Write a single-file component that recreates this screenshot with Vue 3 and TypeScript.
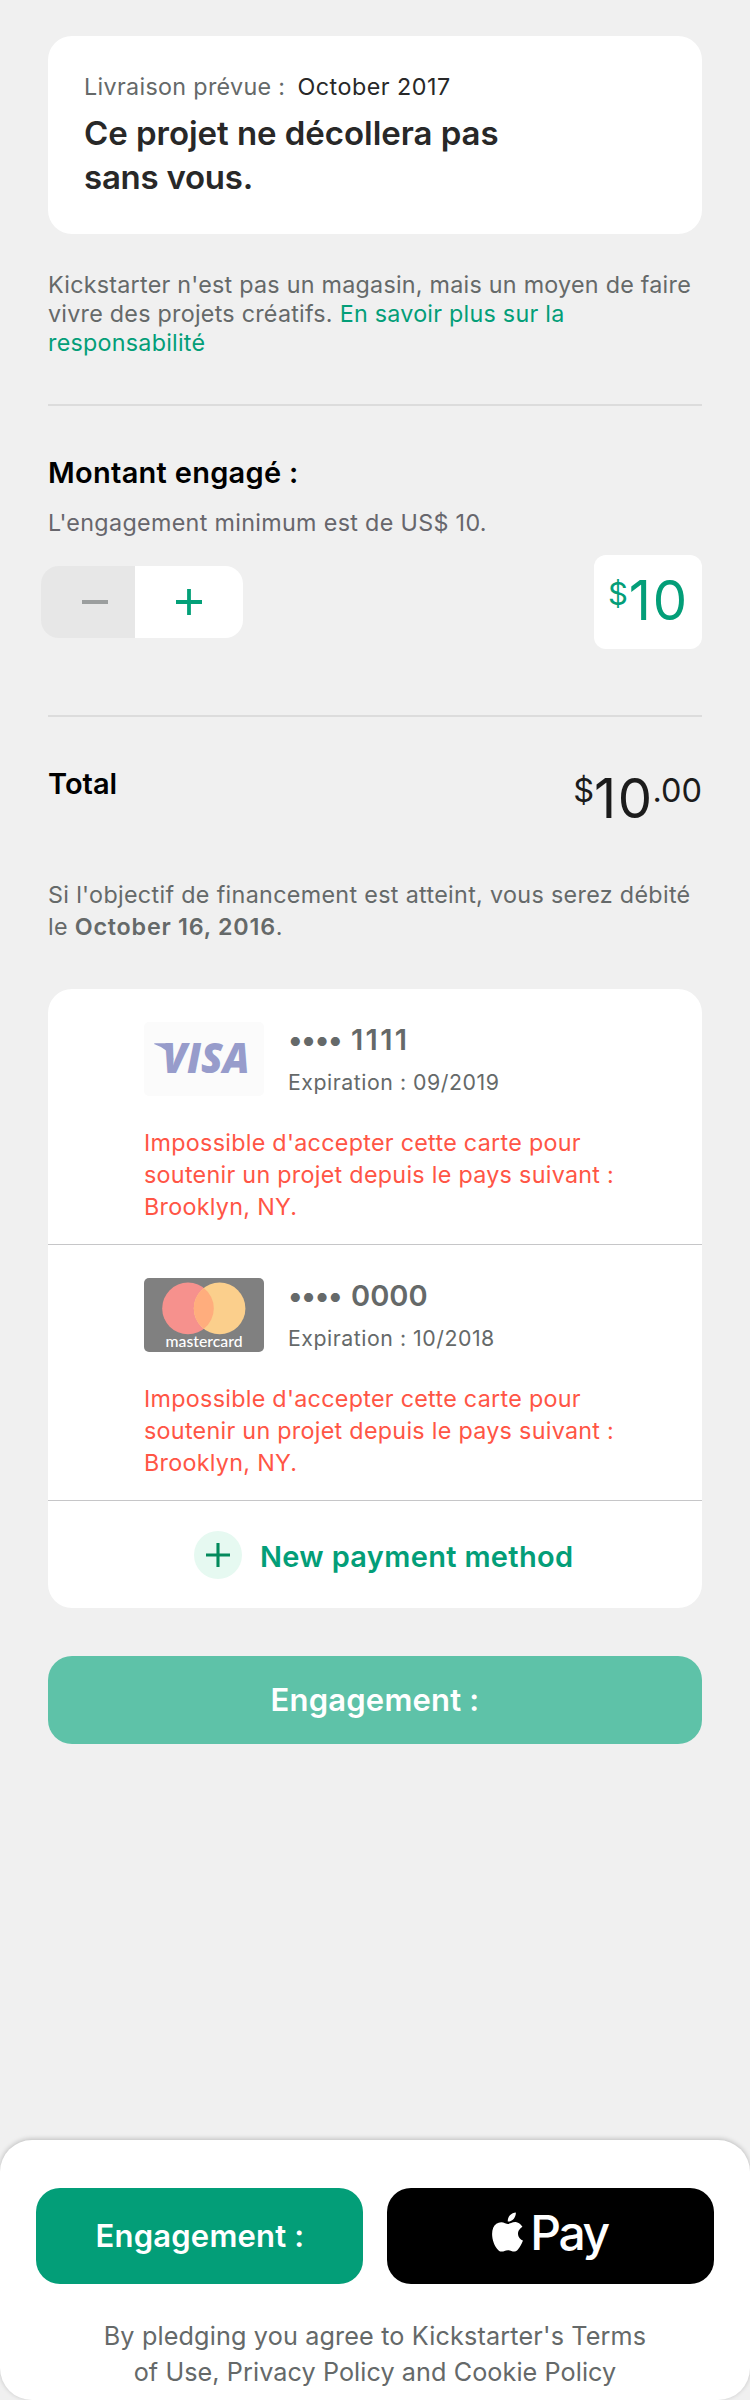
<script setup lang="ts">
interface Card {
  brand: 'visa' | 'mastercard'
  digits: string
  tracking: string
  expiry: string
}

const cards: Card[] = [
  { brand: 'visa', digits: '1111', tracking: 'wide', expiry: 'Expiration : 09/2019' },
  { brand: 'mastercard', digits: '0000', tracking: 'normal', expiry: 'Expiration : 10/2018' },
]
const errorLines: string[] = [
  "Impossible d'accepter cette carte pour",
  'soutenir un projet depuis le pays suivant :',
  'Brooklyn, NY.',
]
</script>

<template>
  <div class="page">
    <main class="content">
      <section class="summary">
        <p class="delivery"><span>Livraison prévue :</span><span class="date">October 2017</span></p>
        <h1>Ce projet ne décollera pas<br /><span class="tight">sans vous.</span></h1>
      </section>

      <p class="note">
        Kickstarter n'est pas un magasin, mais un moyen de faire<br />
        vivre des projets créatifs. <a>En savoir plus sur la<br />responsabilité</a>
      </p>

      <hr />

      <section class="pledge">
        <h2>Montant engagé :</h2>
        <p class="minimum">L'engagement minimum est de US$ 10.</p>
        <div class="controls">
          <div class="stepper">
            <button class="minus" type="button" aria-label="minus">
              <svg width="28" height="28" viewBox="0 0 28 28"><path d="M1 14H27" stroke="#9b9e9e" stroke-width="4" /></svg>
            </button>
            <button class="plus" type="button" aria-label="plus">
              <svg width="28" height="28" viewBox="0 0 28 28"><path d="M1 14H27M14 1V27" stroke="#03a078" stroke-width="3.8" /></svg>
            </button>
          </div>
          <div class="amount"><span class="small">$</span><span class="big">10</span></div>
        </div>
      </section>

      <hr class="second" />

      <section class="total">
        <h2>Total</h2>
        <div class="sum"><span class="small">$</span><span class="big">10</span><span class="small cents">.00</span></div>
      </section>

      <p class="charge">
        Si l'objectif de financement est atteint, vous serez débité<br />
        le <b>October 16, 2016</b>.
      </p>

      <section class="methods">
        <article v-for="card in cards" :key="card.digits" class="method">
          <div class="row">
            <svg v-if="card.brand === 'visa'" class="logo" width="120" height="74" viewBox="0 0 120 74">
              <rect width="120" height="74" rx="5" fill="#fbfbfb" />
              <path d="M10 22Q10 21.300 11 21.300H23Q26.500 21.300 27.200 25L29.500 38Q24.500 27 10 22Z" fill="#979ccb" />
              <text x="18.500" y="51.200" textLength="87" lengthAdjust="spacingAndGlyphs" class="visa">VISA</text>
            </svg>
            <svg v-else class="logo" width="120" height="74" viewBox="0 0 120 74">
              <rect width="120" height="74" rx="5" fill="#808080" />
              <circle cx="44" cy="30.400" r="25.800" fill="#f6918d" />
              <circle cx="75.600" cy="30.400" r="25.800" fill="#fbcf8c" />
              <path d="M59.800 10A25.800 25.800 0 0 1 59.800 50.800A25.800 25.800 0 0 1 59.800 10Z" fill="#ffad7d" />
              <text x="21.500" y="69" textLength="77" lengthAdjust="spacingAndGlyphs" class="mc">mastercard</text>
            </svg>
            <div class="details">
              <p class="number"><span class="dots">••••</span><span :class="card.tracking">{{ card.digits }}</span></p>
              <p class="expiry">{{ card.expiry }}</p>
            </div>
          </div>
          <p class="error"><span v-for="line in errorLines" :key="line">{{ line }}</span></p>
        </article>
        <div class="new-method">
          <svg width="48" height="48" viewBox="0 0 48 48">
            <circle cx="24" cy="24" r="24" fill="#e6f9f1" />
            <path d="M12 24H36M24 12V36" stroke="#038a5c" stroke-width="3.100" />
          </svg>
          <span>New payment method</span>
        </div>
      </section>

      <button class="btn disabled" type="button">Engagement :</button>
    </main>

    <footer class="footer">
      <div class="actions">
        <button class="btn primary" type="button">Engagement :</button>
        <button class="btn apple" type="button">
          <svg width="32" height="40" viewBox="0 0 32 40">
            <path d="M23.800 0.500C24.100 3 23 5.300 21.600 6.900C20.200 8.500 17.900 9.700 15.800 9.500C15.500 7.200 16.600 4.800 17.900 3.300C19.400 1.600 21.900 0.500 23.800 0.500Z" fill="#fff" />
            <path d="M23.800 10.100C20.400 9.900 17.600 12 16 12C14.400 12 12 10.200 9.200 10.200C5.700 10.300 2.500 12.300 1.200 15.800C-1.500 22.500 1.100 32 5.200 37C6.500 38.600 7.900 39.700 9.700 39.600C12 39.500 12.900 38.200 16 38.200C19 38.200 19.900 39.600 22.300 39.600C24.700 39.500 26.200 37.400 27.600 35.300C29.300 32.800 30.700 29.400 31 28.600C28.900 27.700 26 25.500 26 21.700C26 18.200 28.700 16 30.400 14.700C28.500 11.800 25.700 10.300 23.800 10.100Z" fill="#fff" />
          </svg>
          <span>Pay</span>
        </button>
      </div>
      <p class="legal"><span class="l1">By pledging you agree to Kickstarter's Terms</span><span class="l2">of Use, Privacy Policy and Cookie Policy</span></p>
    </footer>
  </div>
</template>

<style>
body {
  margin: 0;
  background: #f0f0f0;
}
</style>

<style scoped>
.page {
  display: flex;
  flex-direction: column;
  width: 750px;
  height: 2400px;
  overflow: hidden;
  background: #f0f0f0;
  font-family: Inter, 'Liberation Sans', sans-serif;
  font-size: 23.3px;
  letter-spacing: 0.3px;
  color: #656969;
  white-space: nowrap;
}
p, h1, h2 { margin: 0; }
button {
  border: 0;
  padding: 0;
  font-family: inherit;
}
svg { display: block; }
.content {
  display: flex;
  flex-direction: column;
  padding: 36px 48px 0;
}
.summary {
  box-sizing: border-box;
  height: 198px;
  padding: 35px 36px 0;
  border-radius: 24px;
  background: #fff;
}
.delivery {
  line-height: 32px;
  letter-spacing: 0.33px;
}
.date {
  margin-left: 12px;
  color: #282828;
  letter-spacing: 0.5px;
}
h1 {
  margin-top: 8px;
  font-size: 33px;
  font-weight: 600;
  line-height: 44px;
  letter-spacing: -0.04px;
  color: #282828;
}
.tight { letter-spacing: -0.25px; }
.note {
  margin-top: 36px;
  line-height: 29px;
  letter-spacing: 0.25px;
}
.note a { color: #039e78; }
hr {
  width: 100%;
  height: 2px;
  margin: 47px 0 0;
  border: 0;
  background: #dcdcdc;
}
h2 {
  font-size: 29px;
  font-weight: 600;
  line-height: 36px;
  letter-spacing: 0.28px;
  color: #000;
}
.pledge h2 { margin-top: 49px; }
.minimum {
  margin-top: 16px;
  line-height: 32px;
  letter-spacing: 0.33px;
  color: #67666c;
}
.controls {
  display: flex;
  align-items: center;
  justify-content: space-between;
  margin-top: 16px;
}
.stepper {
  display: flex;
  width: 202px;
  height: 72px;
  margin-left: -7px;
  overflow: hidden;
  border-radius: 18px;
}
.stepper button {
  display: flex;
  align-items: center;
  justify-content: center;
}
.minus {
  box-sizing: border-box;
  width: 94px;
  padding-left: 14px;
  background: #e7e7e7;
}
.plus {
  width: 108px;
  background: #fff;
}
.amount {
  box-sizing: border-box;
  display: flex;
  justify-content: flex-end;
  width: 108px;
  height: 94px;
  padding-right: 13px;
  border-radius: 12px;
  background: #fff;
  color: #039e78;
}
.big {
  font-size: 54.5px;
  line-height: 91px;
  letter-spacing: 1.8px;
}
.small {
  font-size: 31px;
  line-height: 78px;
  letter-spacing: 0;
}
.amount .small { margin-right: 1px; }
.second { margin-top: 66px; }
.total {
  display: flex;
  justify-content: space-between;
  height: 66px;
  margin-top: 48px;
}
.total h2 {
  margin-top: 1px;
  letter-spacing: 0;
}
.sum {
  display: flex;
  color: #1c1c1c;
}
.sum .big {
  line-height: 66px;
  letter-spacing: 1.4px;
}
.sum .small {
  font-size: 32.5px;
  line-height: 51px;
}
.sum .cents { margin-left: -1px; }
.charge {
  margin-top: 47.5px;
  line-height: 32px;
  letter-spacing: 0.33px;
}
.charge b {
  font-weight: 600;
  letter-spacing: 0.78px;
}
.methods {
  box-sizing: border-box;
  height: 619px;
  margin-top: 46.5px;
  border-radius: 24px;
  background: #fff;
}
.method {
  box-sizing: border-box;
  height: 256px;
  padding: 33px 0 0 96px;
  border-bottom: 1px solid #c6c6c8;
}
.row {
  display: flex;
  gap: 24px;
  height: 74px;
}
.visa {
  font: italic 800 42px 'Open Sans', sans-serif;
  letter-spacing: 0;
  fill: #979ccb;
}
.mc {
  font: 500 15.5px Lato, sans-serif;
  letter-spacing: 0;
  fill: #fff;
}
.number {
  display: flex;
  font-size: 29px;
  font-weight: 600;
  line-height: 36px;
  letter-spacing: 0;
}
.dots {
  width: 63px;
  letter-spacing: -1.27px;
}
.wide { letter-spacing: 2.3px; }
.expiry {
  margin-top: 11px;
  font-size: 21.3px;
  line-height: 26px;
  letter-spacing: 0.53px;
}
.error {
  margin-top: 30.5px;
  line-height: 32.1px;
  letter-spacing: 0.29px;
  color: #ff5545;
}
.error span { display: block; }
.new-method {
  display: flex;
  align-items: center;
  gap: 18px;
  height: 107px;
  padding-left: 146px;
  color: #039e78;
  font-size: 29px;
  font-weight: 600;
  letter-spacing: 0.32px;
}
.new-method span { padding-top: 4px; }
.btn {
  display: flex;
  align-items: center;
  justify-content: center;
  border-radius: 24px;
  color: #fff;
  font-size: 31px;
  font-weight: 600;
  letter-spacing: 0.2px;
}
.disabled {
  box-sizing: border-box;
  height: 88px;
  margin-top: 48px;
  padding-bottom: 2px;
  background: #5ec2a8;
}
.footer {
  box-sizing: border-box;
  height: 260px;
  margin-top: auto;
  padding: 48px 36px 0;
  border-radius: 32px;
  background: #fff;
  box-shadow: 0 -1px 5px rgba(0, 0, 0, 0.22);
}
.actions {
  display: grid;
  grid-template-columns: 1fr 1fr;
  gap: 24px;
}
.primary {
  box-sizing: border-box;
  height: 96px;
  padding: 0 0 2px 1px;
  background: #039e78;
}
.apple {
  gap: 6px;
  background: #000;
}
.apple svg { margin-bottom: 9px; }
.apple span {
  font-size: 48px;
  font-weight: 500;
  line-height: 58px;
  letter-spacing: -2.4px;
  margin: 0 1px 7px 0;
}
.legal {
  margin-top: 34px;
  font-size: 25.2px;
  line-height: 36px;
  text-align: center;
}
.legal span { display: block; }
.l1 { letter-spacing: 0.15px; }
.l2 { letter-spacing: 0.08px; }
</style>
